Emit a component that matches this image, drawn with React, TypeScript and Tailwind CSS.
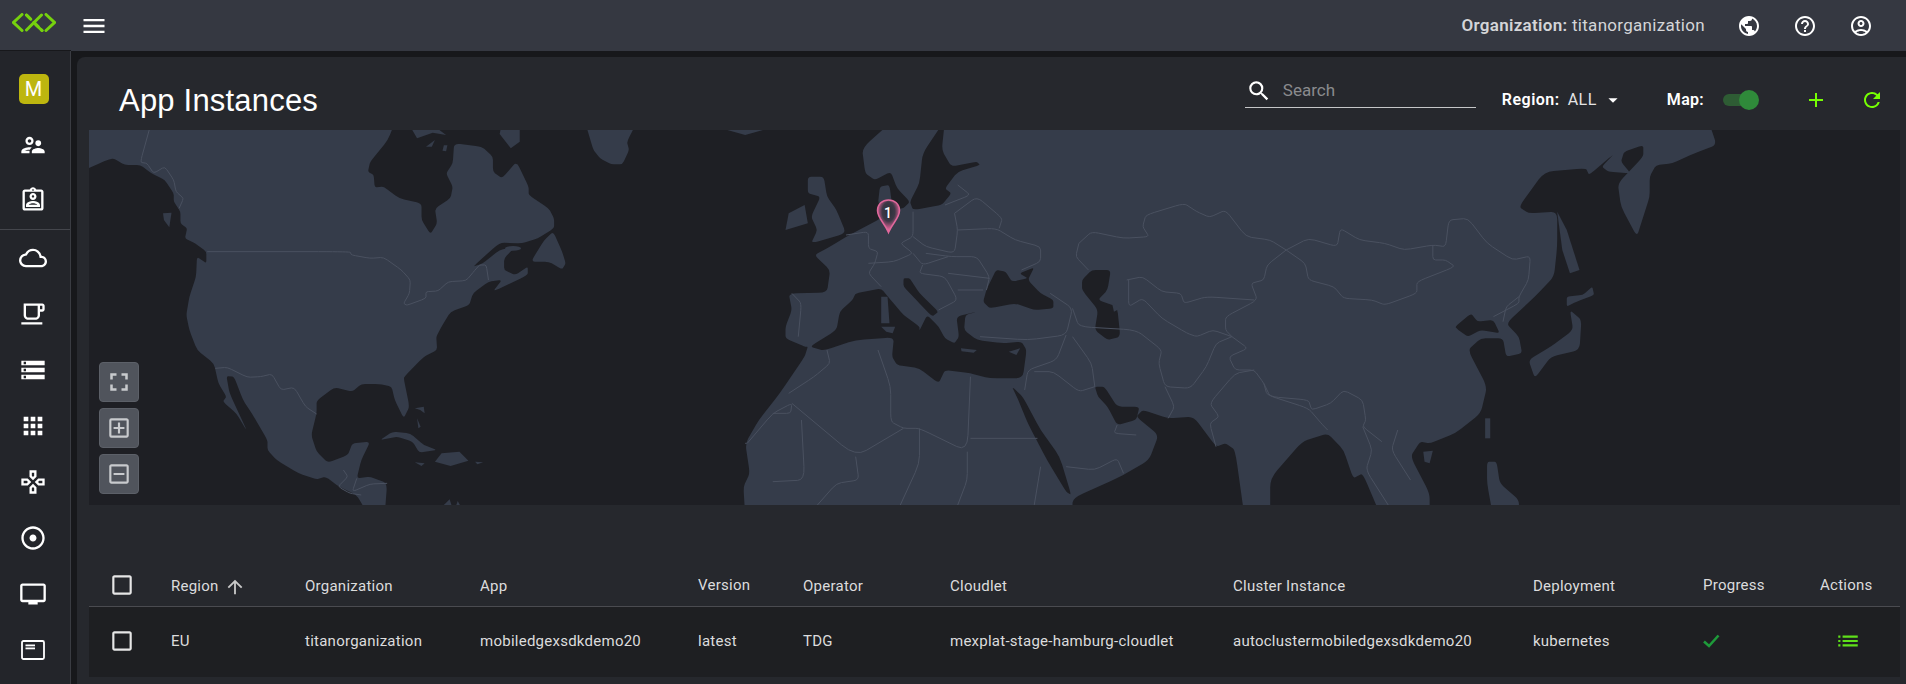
import {
  MdMenu, MdPublic, MdHelpOutline, MdOutlineAccountCircle, MdSearch, MdArrowDropDown, MdAdd, MdRefresh,
  MdOutlineSupervisorAccount, MdOutlineAssignmentInd, MdOutlineCloud, MdOutlineLocalCafe, MdStorage, MdApps,
  MdOutlineGamepad, MdOutlineAdjust, MdOutlineTv, MdFullscreen, MdOutlineAddBox,
  MdOutlineIndeterminateCheckBox, MdCheckBoxOutlineBlank, MdArrowUpward, MdList,
} from "react-icons/md";

const LAND = "#353c4a";
const WATER = "#1e1f24";
const LINE = "#4a5160";

function parse(s: string) {
  return s.split(" ").map((p) => {
    const [x, y] = p.split(",").map(Number);
    return [x, y] as [number, number];
  });
}

const CUT = 0.22;

function closedPath(s: string) {
  const pts = parse(s);
  const n = pts.length;
  if (n < 6) return "M" + pts.map((p) => p.join(" ")).join("L") + "Z";
  let d = "";
  for (let i = 0; i < n; i++) {
    const p = pts[i];
    const a = pts[(i - 1 + n) % n];
    const b = pts[(i + 1) % n];
    const s1 = [p[0] + (a[0] - p[0]) * CUT, p[1] + (a[1] - p[1]) * CUT];
    const s2 = [p[0] + (b[0] - p[0]) * CUT, p[1] + (b[1] - p[1]) * CUT];
    d += `${i === 0 ? "M" : "L"}${s1[0]} ${s1[1]}Q${p[0]} ${p[1]} ${s2[0]} ${s2[1]}`;
  }
  return d + "Z";
}

function openPath(s: string) {
  const pts = parse(s);
  const n = pts.length;
  let d = `M${pts[0][0]} ${pts[0][1]}`;
  for (let i = 1; i < n - 1; i++) {
    const p = pts[i];
    const a = pts[i - 1];
    const b = pts[i + 1];
    d += `L${p[0] + (a[0] - p[0]) * CUT} ${p[1] + (a[1] - p[1]) * CUT}Q${p[0]} ${p[1]} ${p[0] + (b[0] - p[0]) * CUT} ${p[1] + (b[1] - p[1]) * CUT}`;
  }
  return d + `L${pts[n - 1][0]} ${pts[n - 1][1]}`;
}

const naLand = [
  "-40,150 -40,-40 710,-40 690,30 650,95 645,125 658,135 660,172 680,170 715,205 765,220 765,270 785,312 800,280 795,235 830,205 835,170 820,130 835,100 838,40 900,50 925,80 925,125 945,145 978,95 1005,170 1005,195 1050,235 1062,265 1062,295 1025,325 990,340 940,338 880,410 900,402 940,360 975,350 950,385 950,420 975,435 1003,410 1003,435 925,485 945,450 915,455 880,490 872,525 830,545 810,590 798,620 800,660 770,680 730,735 725,745 738,830 725,865 705,810 698,770 670,762 630,762 610,785 570,772 530,812 530,850 518,915 530,965 555,998 600,975 610,940 650,935 630,990 620,1045 650,1040 688,1060 682,1165 650,1165 620,1095 580,1070 550,1040 530,1048 490,1030 440,990 420,960 420,930 385,850 365,810 345,740 328,738 335,790 375,905 350,850 320,815 328,800 310,760 300,700 262,660 245,600 238,555 245,500 260,440 262,380 283,400 283,365 258,340 235,325 240,295 225,280 225,245 210,215 210,190 190,150 160,130 135,105 100,105 75,85 60,90",
  "1060,305 1040,330 1010,395 1050,395 1080,418 1088,400 1080,365",
  "945,-20 985,-20 985,35 965,55 940,12",
  "740,-10 755,25 790,8 820,15 795,-10",
  "775,50 795,30 788,50",
  "812,62 815,46 823,46 820,64",
  "186,250 205,248 200,292 188,270",
  "672,930 700,905 740,910 770,945 800,960 760,968 745,935 710,920",
  "810,970 850,965 870,992 830,1008 795,995",
  "750,997 772,1000 765,1008",
  "885,995 903,997 890,1003",
  "750,835 770,830 772,850 762,840",
  "755,865 763,890 758,895",
  "815,1125 828,1108 832,1125",
  "843,1125 846,1113 851,1125",
  "1130,-30 1250,-30 1225,35 1230,60 1215,103 1190,103 1165,85 1150,60",
  "1450,0 1530,0 1490,15",
];

const naBorders = [
  "285,365 605,365 608,375 650,385 680,382 720,420 740,450 738,490 725,520 732,526 775,505 775,485 802,483 825,455 865,452 885,420 895,405 910,405 915,450",
  "155,0 135,97 150,100 165,130 190,110 210,150 215,185 232,205 222,235",
  "303,715 330,712 375,742 405,740 430,732 450,780 480,772 505,830 530,852",
  "590,1020 600,1040 578,1070 605,1090 630,1095",
  "620,1045 610,1085 650,1062 688,1060",
  "1490,940 1535,938 1555,850 1568,848",
];

const eurasia = "75,650 70,680 31,790 -2,870 -23,940 -16,1030 -26,1070 -23,1165 490,1165 490,1105 565,1040 610,990 625,915 590,860 600,840 640,865 680,860 715,950 730,940 745,960 760,1165 800,1165 800,1045 850,935 890,910 915,960 930,1045 945,1030 975,1165 1050,1165 1050,1090 1020,980 1035,935 1050,940 1090,910 1130,850 1140,770 1110,660 1130,625 1165,625 1170,680 1195,670 1190,620 1170,580 1215,500 1245,440 1250,350 1250,245 1205,250 1190,230 1230,125 1295,115 1300,135 1340,70 1320,110 1330,125 1365,130 1350,95 1355,65 1385,45 1385,80 1345,160 1350,230 1375,320 1385,260 1395,200 1395,140 1405,105 1430,100 1465,70 1500,45 1485,-40 215,-40 160,55 165,130 180,150 205,125 215,175 235,215 225,235 208,238 203,165 188,170 185,220 200,250 185,270 140,315 110,350 85,375 110,420 105,488 45,490 50,540 40,590 40,625 70,650";

const seas = [
  "235,215 250,160 255,70 290,-30 285,60 300,110 340,95 345,105 310,125 290,175 300,190 285,225 240,240",
  "78,650 120,600 125,545 145,510 150,490 190,475 205,510 225,555 250,590 250,602 262,555 280,590 290,625 305,640 312,620 308,560 340,545 322,555 320,600 340,630 380,640 410,635 418,660 412,745 360,745 330,730 290,720 280,760 250,715 215,705 207,680 210,622 150,630 100,662",
  "225,445 235,445 250,490 280,545 270,560 245,510 225,470",
  "370,420 385,425 395,455 420,445 407,430 430,412 420,450 440,490 460,510 460,535 430,540 400,520 360,535 350,515 355,480",
  "520,420 550,420 545,480 530,510 560,530 565,620 545,630 525,600 530,540 505,480 505,450",
  "395,770 412,800 440,900 470,980 488,1095 480,1085 450,990 420,880 405,810",
  "525,770 540,770 560,830 595,830 590,870 560,885 545,830 530,800",
  "1090,590 1115,550 1125,575 1150,570 1160,610 1130,600 1110,620 1095,600",
];

const islands = [
  "75,140 100,140 105,200 120,240 135,310 80,340 90,300 80,260 95,200 75,190",
  "45,250 70,225 75,280 40,300",
  "190,500 200,500 203,580 190,580",
  "190,590 212,590 208,610 198,605",
  "315,655 340,660 335,668 316,664",
  "390,665 408,655 402,675",
  "1250,245 1265,300 1285,420 1270,430 1258,360",
  "1265,500 1290,495 1305,470 1308,495 1280,515 1265,530",
  "1270,540 1288,570 1285,660 1240,680 1215,745 1205,690 1240,650 1275,600",
  "1137,865 1145,865 1145,925 1137,925",
  "1040,965 1055,962 1050,1000 1042,995",
  "1140,995 1155,995 1160,1060 1190,1110 1190,1165 1150,1165 1140,1060",
  "552,520 565,535 555,545",
];

const borders = [
  "500,340 520,305 570,325 610,320 600,290 605,255 665,220 685,245 705,262 730,240 762,320 800,330 825,360",
  "825,360 860,325 905,350 910,295 940,330 980,340 1010,360 1055,345 1075,350 1080,270 1110,265 1140,340 1180,390 1208,378 1205,450 1190,500 1190,520 1150,560",
  "825,360 855,400 860,450 900,470 915,505 960,510 980,525 1030,490 1030,455 1090,410 1075,390 1055,390 1055,345",
  "825,360 795,405 790,450 770,460 780,510 730,560 730,600 740,620",
  "500,340 495,380 515,420",
  "575,450 600,440 630,485 660,490 665,520 700,500 775,510",
  "578,450 578,530 600,505 630,565 670,610 685,620 710,600 740,620",
  "740,620 765,655 735,680 745,720 775,720 790,760 800,800 860,810 865,840 895,820 915,780 945,810 950,870 945,890 975,935",
  "790,760 795,795 860,835 880,880 890,900",
  "490,535 500,590 590,600 630,660 625,700 635,770 675,775 700,710 715,640 740,620",
  "635,770 650,830 640,865",
  "715,950 705,880 720,860 705,820 745,730 775,720",
  "345,620 420,630 480,615 490,535 455,490",
  "480,615 465,690 420,720 415,780",
  "490,620 520,700 525,770",
  "430,725 460,725 500,785 525,770",
  "560,885 555,910 590,915",
  "480,1010 525,1020 560,985 570,1030",
  "135,315 170,305 170,355 185,365 180,400 170,430 190,470",
  "240,245 240,320 220,340 240,370 210,395 170,400",
  "305,250 310,300 305,370 260,350 240,320",
  "310,300 370,295 400,330 440,350 440,395 410,420",
  "305,250 340,200 380,265 375,295",
  "290,225 330,195 310,165",
  "260,370 300,380 340,380 360,440 355,480",
  "240,370 255,405 295,380",
  "255,405 250,430 290,440 310,510 280,540",
  "295,430 360,445",
  "310,480 350,480",
  "50,490 65,520 60,620",
  "185,660 205,770 205,875 225,895 250,895 325,965 330,740",
  "330,925 435,925",
  "50,820 150,980 225,895",
  "65,870 70,1050 20,1055",
  "-20,940 20,850 50,820 48,850 20,850",
  "105,660 110,700 85,740 45,790",
  "150,980 155,1050 120,1060 90,1125",
  "250,895 250,1000 220,1125",
  "325,965 325,1050 310,1125",
  "440,1010 430,1125",
  "1000,900 990,960 1020,1050",
  "945,890 960,960 950,1020 985,1125",
  "1190,500 1170,530 1165,575",
];

function MapSvg() {
  return (
    <svg className="absolute inset-0 w-full h-full" viewBox="89 130 1811 375" preserveAspectRatio="none">
      <g transform="translate(80 130) scale(0.44643 0.33333)" fill={LAND}>
        {naLand.map((p, i) => <path key={i} d={closedPath(p)} />)}
        <ellipse cx="970" cy="355" rx="18" ry="7" fill={LAND} />
        <g fill="none" stroke={LINE} strokeWidth="1">
          {naBorders.map((p, i) => <path key={i} d={openPath(p)} vectorEffect="non-scaling-stroke" />)}
        </g>
      </g>
      <g transform="translate(760 130) scale(0.63776 0.33333)">
        <path d={closedPath(eurasia)} fill={LAND} />
        {seas.map((p, i) => <path key={i} d={closedPath(p)} fill={WATER} />)}
        {islands.map((p, i) => <path key={i} d={closedPath(p)} fill={LAND} />)}
        <g fill="none" stroke={LINE}>
          {borders.map((p, i) => <path key={i} d={openPath(p)} vectorEffect="non-scaling-stroke" strokeWidth="1" />)}
        </g>
      </g>
      <defs>
        <radialGradient id="pinFill" cx="50%" cy="36%" r="58%">
          <stop offset="0%" stopColor="#2b2e38" />
          <stop offset="50%" stopColor="#3d3846" />
          <stop offset="80%" stopColor="#b05580" />
          <stop offset="100%" stopColor="#e8709f" />
        </radialGradient>
      </defs>
      <path d="M888.500 232.500 C884 222 877.500 218 877.500 210.500 C877.500 204 882.500 200 888.500 200 C894.500 200 899.500 204 899.500 210.500 C899.500 218 893 222 888.500 232.500 Z" fill="url(#pinFill)" stroke="#e0689c" strokeWidth="1.5" />
    </svg>
  );
}

function CardIcon() {
  return (
    <svg width="28" height="28" viewBox="0 0 28 28" fill="none">
      <rect x="3" y="5" width="22" height="18" rx="1.5" stroke="white" strokeWidth="1.800" />
      <rect x="6.500" y="8.500" width="9.500" height="1.800" fill="white" />
      <rect x="6.500" y="11.500" width="9.500" height="1.800" fill="white" />
    </svg>
  );
}

const sideIcons = [MdOutlineCloud, MdOutlineLocalCafe, MdStorage, MdApps, MdOutlineGamepad, MdOutlineAdjust, MdOutlineTv];

const cols = "grid grid-cols-[82px_134px_175px_218px_105px_147px_283px_300px_170px_117px_80px] items-center";

const headers: [string, string?][] = [
  ["Region"], ["Organization"], ["App"], ["Version", "-translate-y-px"], ["Operator"], ["Cloudlet"], ["Cluster Instance"], ["Deployment"], ["Progress", "-translate-y-px"], ["Actions", "-translate-y-px"],
];
const cells = ["EU", "titanorganization", "mobiledgexsdkdemo20", "latest", "TDG", "mexplat-stage-hamburg-cloudlet", "autoclustermobiledgexsdkdemo20", "kubernetes"];

function MapButton({ children }: { children: React.ReactNode }) {
  return (
    <div className="w-10 h-10 rounded bg-[#50545c] border border-[#5c6068] flex items-center justify-center text-[#c8cacd]">
      {children}
    </div>
  );
}

export default function App() {
  return (
    <div className="w-[1906px] h-[684px] overflow-hidden flex flex-col bg-[#17181b] text-white [font-family:Roboto,sans-serif]">
      <header className="h-[51px] shrink-0 bg-[#353841] flex items-center">
        <svg className="ml-3 mb-[6px] w-11 h-[19px]" viewBox="0 0 44 19" fill="none" stroke="#76d10e" strokeWidth="3" strokeLinecap="round" strokeLinejoin="miter">
          <path d="M10 1.500 L1.500 9.500 L10 17.500" />
          <path d="M34 1.500 L42.500 9.500 L34 17.500" />
          <path d="M14.500 2 L18 5.500 M24 12 L30 17.500 M29.500 2 L14.500 17" />
          <path d="M14.500 2 L30 17.500" strokeDasharray="6 4.500" />
        </svg>
        <MdMenu className="ml-[24px] text-white" size={28} />
        <div className="ml-auto flex items-center">
          <span className="text-[17px] tracking-[0.3px] text-[#d4d5d8]"><span className="font-semibold">Organization:</span> titanorganization</span>
          <div className="ml-[32px] flex items-center gap-[32px] mr-[33px]">
            <MdPublic size={24} />
            <MdHelpOutline size={24} />
            <MdOutlineAccountCircle size={24} />
          </div>
        </div>
      </header>
      <div className="flex-1 flex pt-[6px] min-h-0">
        <aside className="-mt-[6px] w-[71px] shrink-0 bg-[#23252a] border-r border-[#3a3c42] flex flex-col items-center shadow-[0_-1px_0_#17181b]">
          <div className="mt-[23px] w-[30px] h-[30px] rounded-[5px] bg-[#bdb60f] flex items-center justify-center text-[20px] text-white -ml-[3px]">M</div>
          <div className="mt-[27px] -ml-1 h-7 flex items-center justify-center"><MdOutlineSupervisorAccount size={28} /></div>
          <div className="mt-[27px] -ml-1 h-7 flex items-center justify-center"><MdOutlineAssignmentInd size={28} /></div>
          <div className="mt-[15px] w-full h-px bg-[#44464c]" />
          <div className="mt-[14px] flex flex-col items-center gap-[28px] -ml-1">
            {sideIcons.map((I, i) => <I key={i} size={28} />)}
            <CardIcon />
          </div>
        </aside>
        <main className="ml-[6px] flex-1 min-w-0 rounded-tl-lg bg-[#26282d] pl-3 pr-[6px] flex flex-col">
          <div className="h-[73px] shrink-0 flex items-start -ml-3 pl-[42px]">
            <h1 className="mt-[26px] text-[31px] leading-[36px] [font-family:'Liberation_Sans',sans-serif] tracking-[0.2px]">App Instances</h1>
            <div className="ml-auto flex items-start">
              <div className="mt-[18px] w-[231px] h-[33px] border-b border-[#c5c6c8] flex items-center pl-[1px]">
                <MdSearch size={26} className="text-white" />
                <span className="ml-[11px] text-[17px] text-[#8a8b8e]">Search</span>
              </div>
              <div className="ml-[26px] mt-[33px] flex items-center h-[20px] text-[16px] tracking-[0.5px]">
                <span className="font-semibold">Region:</span>
                <span className="ml-[8px] text-[#e4e4e5]">ALL</span>
                <MdArrowDropDown size={22} className="ml-[5px]" />
              </div>
              <div className="ml-[43px] mt-[33px] flex items-center h-[20px] text-[16px] tracking-[0.3px]">
                <span className="font-semibold">Map:</span>
                <div className="relative ml-[19px] w-[33px] h-[12px] rounded-full bg-[#2e5c34]">
                  <div className="absolute -right-[3px] -top-[4px] w-5 h-5 rounded-full bg-[#2f8a3a]" />
                </div>
              </div>
              <MdAdd size={24} className="ml-[48px] mt-[31px] text-[#76ff03]" />
              <MdRefresh size={24} className="ml-[32px] mt-[31px] mr-[16px] text-[#76ff03]" />
            </div>
          </div>
          <div className="relative h-[375px] shrink-0 bg-[#1e1f24] overflow-hidden">
            <MapSvg />
            <span className="absolute left-[795px] top-[74px] text-[14px] leading-[18px] font-medium text-white">1</span>
            <div className="absolute left-[10px] top-[232px] flex flex-col gap-[6px]">
              <MapButton><MdFullscreen size={30} /></MapButton>
              <MapButton><MdOutlineAddBox size={26} /></MapButton>
              <MapButton><MdOutlineIndeterminateCheckBox size={26} /></MapButton>
            </div>
          </div>
          <div className={`${cols} h-[102px] shrink-0 pt-[62px] border-b border-[#4a4b50] text-[15px] tracking-[0.25px] text-[#dcdcdd]`}>
            <div className="pl-[20px] -translate-y-[2px]"><MdCheckBoxOutlineBlank size={26} className="text-[#e6e6e6]" /></div>
            {headers.map(([h, extra], i) => (
              <div key={h} className={`flex items-center ${extra ?? ""}`}>
                {h}
                {i === 0 && <MdArrowUpward size={22} className="ml-[5px] text-[#c8c8c8]" />}
              </div>
            ))}
          </div>
          <div className={`${cols} h-[70px] shrink-0 bg-[#1e1f22] text-[15px] tracking-[0.25px] text-[#dcdcdd] pb-[2px]`}>
            <div className="pl-[20px]"><MdCheckBoxOutlineBlank size={26} className="text-[#e6e6e6]" /></div>
            {cells.map((c) => <div key={c}>{c}</div>)}
            <div>
              <svg width="17" height="14" viewBox="0 0 17 14" fill="none" stroke="#1e9a3a" strokeWidth="2.600">
                <path d="M1 7.500 L6 12 L15.500 1.500" />
              </svg>
            </div>
            <div className="pl-[15px]"><MdList size={26} className="text-[#5fe01a]" /></div>
          </div>
        </main>
      </div>
    </div>
  );
}
